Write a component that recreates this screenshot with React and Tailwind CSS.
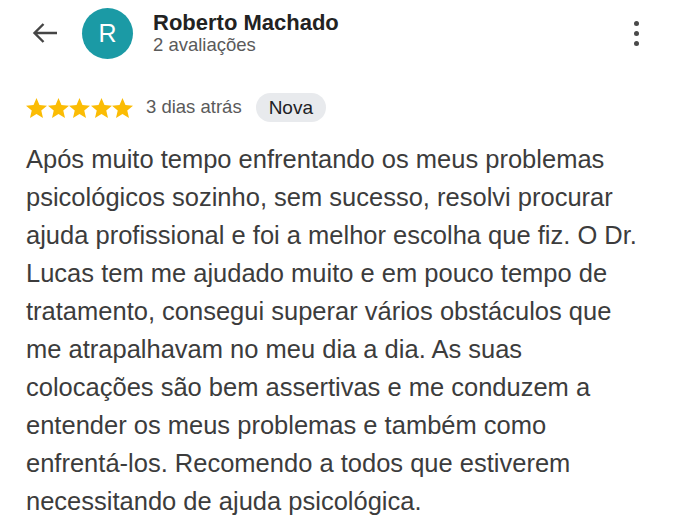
import React from "react";

const lines = [
  "Após muito tempo enfrentando os meus problemas",
  "psicológicos sozinho, sem sucesso, resolvi procurar",
  "ajuda profissional e foi a melhor escolha que fiz. O Dr.",
  "Lucas tem me ajudado muito e em pouco tempo de",
  "tratamento, consegui superar vários obstáculos que",
  "me atrapalhavam no meu dia a dia. As suas",
  "colocações são bem assertivas e me conduzem a",
  "entender os meus problemas e também como",
  "enfrentá-los. Recomendo a todos que estiverem",
  "necessitando de ajuda psicológica.",
];

function Star() {
  return (
    <svg width="21" height="20" viewBox="2 2 20 19">
      <path
        d="M12 17.27L18.18 21l-1.64-7.03L22 9.24l-7.19-.61L12 2 9.19 8.63 2 9.24l5.46 4.73L5.82 21z"
        fill="#fbbc04"
      />
    </svg>
  );
}

export default function App() {
  return (
    <div className="w-[680px] h-[531px] bg-white overflow-hidden font-['Liberation_Sans',Arial,sans-serif]">
      <div className="flex items-center h-[66px] pl-[32px]">
        <svg width="26" height="22" viewBox="0 0 26 22" fill="none">
          <path d="M25 11 H2.5 M11.5 2 L2.5 11 L11.5 20" stroke="#454545" strokeWidth="2.4" />
        </svg>
        <div className="ml-[24px] w-[51px] h-[51px] rounded-full bg-[#1b9aa5] flex items-center justify-center text-white text-[25px] leading-none">
          R
        </div>
        <div className="ml-[20px] flex flex-col">
          <div className="text-[22px] leading-[24px] font-bold text-[#222222]">Roberto Machado</div>
          <div className="text-[18.5px] leading-[20px] text-[#5a5a5a]">2 avaliações</div>
        </div>
        <div className="ml-auto mr-[41px] flex flex-col gap-[5px]">
          <div className="w-[5px] h-[5px] rounded-full bg-[#4a4a4a]" />
          <div className="w-[5px] h-[5px] rounded-full bg-[#4a4a4a]" />
          <div className="w-[5px] h-[5px] rounded-full bg-[#4a4a4a]" />
        </div>
      </div>

      <div className="flex items-center h-[29px] mt-[27px] pl-[26px]">
        <div className="flex gap-[0.5px]">
          <Star />
          <Star />
          <Star />
          <Star />
          <Star />
        </div>
        <span className="ml-[13px] text-[18.5px] text-[#5a5a5a] leading-none">3 dias atrás</span>
        <span className="ml-[14px] h-[29px] px-[13px] rounded-full bg-[#e8eaed] text-[19px] text-[#202124] flex items-center leading-none">
          Nova
        </span>
      </div>

      <div className="mt-[18px] pl-[26px] text-[25.5px] leading-[38px] text-[#3c3c3c] whitespace-nowrap">
        {lines.map((l, i) => (
          <div key={i}>{l}</div>
        ))}
      </div>
    </div>
  );
}
